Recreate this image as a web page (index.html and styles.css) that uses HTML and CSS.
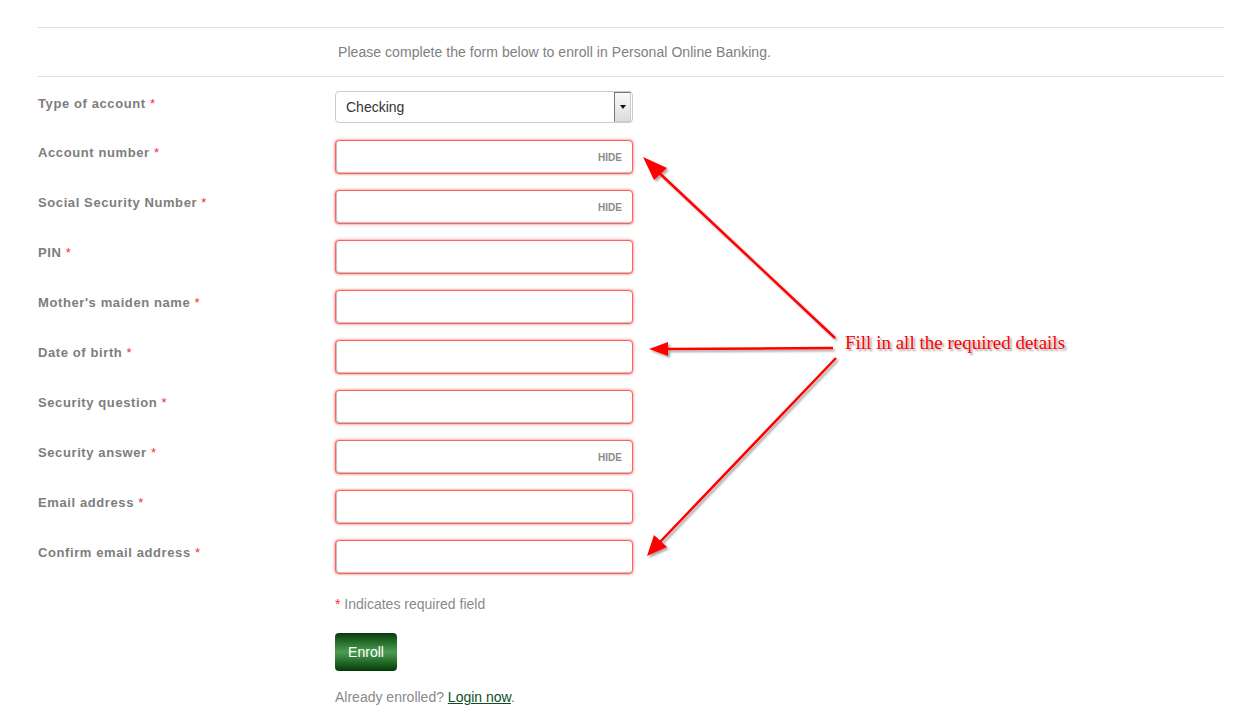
FILE: index.html
```html
<!DOCTYPE html>
<html lang="en">
<head>
  <meta charset="UTF-8" />
  <title>Enroll in Personal Online Banking</title>
  <link rel="stylesheet" href="styles.css">
</head>
<body>

  <div class="page">

    <div class="intro">
      <p>Please complete the form below to enroll in Personal Online Banking.</p>
    </div>

    <form class="enroll-form">

      <div class="row row-first">
        <label>Type of account <span class="req">*</span></label>
        <div class="select">
          <span class="select-value">Checking</span>
          <span class="select-btn"><span class="caret"></span></span>
        </div>
      </div>

      <div class="row">
        <label>Account number <span class="req">*</span></label>
        <div class="field"><input type="text" /><span class="hide">HIDE</span></div>
      </div>

      <div class="row">
        <label>Social Security Number <span class="req">*</span></label>
        <div class="field"><input type="text" /><span class="hide">HIDE</span></div>
      </div>

      <div class="row">
        <label>PIN <span class="req">*</span></label>
        <div class="field"><input type="text" /></div>
      </div>

      <div class="row">
        <label>Mother's maiden name <span class="req">*</span></label>
        <div class="field"><input type="text" /></div>
      </div>

      <div class="row">
        <label>Date of birth <span class="req">*</span></label>
        <div class="field"><input type="text" /></div>
      </div>

      <div class="row">
        <label>Security question <span class="req">*</span></label>
        <div class="field"><input type="text" /></div>
      </div>

      <div class="row">
        <label>Security answer <span class="req">*</span></label>
        <div class="field"><input type="text" /><span class="hide">HIDE</span></div>
      </div>

      <div class="row">
        <label>Email address <span class="req">*</span></label>
        <div class="field"><input type="text" /></div>
      </div>

      <div class="row">
        <label>Confirm email address <span class="req">*</span></label>
        <div class="field"><input type="text" /></div>
      </div>

      <div class="form-end">
        <p class="note"><span class="req">*</span> Indicates required field</p>
        <button type="button" class="btn-enroll">Enroll</button>
        <p class="already">Already enrolled? <a href="#">Login now</a>.</p>
      </div>

    </form>

    <!-- annotation drawn over the page -->
    <div class="callout">
      <svg width="1242" height="714" viewBox="0 0 1242 714">
        <defs>
          <filter id="shadow" x="-10%" y="-10%" width="120%" height="120%">
            <feDropShadow dx="2" dy="2" stdDeviation="1.2" flood-color="#000" flood-opacity="0.35" />
          </filter>
        </defs>
        <g filter="url(#shadow)" stroke="#ff0000" stroke-width="2.5" fill="#ff0000">
          <line x1="835" y1="338" x2="655" y2="169" />
          <polygon points="643,157 667,168 654,180" stroke="none" />
          <line x1="833" y1="348" x2="664" y2="349" />
          <polygon points="649,349 668,342 668,356" stroke="none" />
          <line x1="836" y1="358" x2="660" y2="542" />
          <polygon points="647,556 654,535 667,547" stroke="none" />
        </g>
      </svg>
      <span class="callout-text">Fill in all the required details</span>
    </div>

  </div>

</body>
</html>
```

FILE: styles.css
```css
:root {
  --label-color: #7d7d7d;
  --text-color: #808080;
  --line-color: #dddddd;
  --req-color: #ee3333;
  --font-main: Arial, 'Liberation Sans', sans-serif;
}

body {
  margin: 0;
  font-family: var(--font-main);
  background: #fff;
  color: var(--text-color);
}

.page {
  position: relative;
  padding: 27px 18px 0 38px;
  height: 687px;
  overflow: hidden;
}

.intro {
  border-top: 1px solid var(--line-color);
  border-bottom: 1px solid var(--line-color);
  padding-left: 300px;
}

.intro p {
  margin: 0;
  padding: 16px 0 15px;
  font-size: 14px;
  line-height: 17px;
  letter-spacing: 0.05px;
  color: #808080;
}

.enroll-form {
  margin-top: 14px;
}

.row {
  display: grid;
  grid-template-columns: 297px 298px;
  height: 50px;
}

.row-first {
  height: 49px;
}

.row label {
  font-size: 13px;
  font-weight: bold;
  line-height: 16px;
  letter-spacing: 0.6px;
  color: var(--label-color);
  padding-top: 5px;
}

.req {
  color: var(--req-color);
  font-weight: normal;
}

.select {
  display: flex;
  align-items: center;
  height: 32px;
  box-sizing: border-box;
  border: 1px solid #cccccc;
  border-radius: 4px;
  padding: 0 1px 0 10px;
  background: #fff;
}

.select-value {
  flex: 1;
  font-size: 14px;
  color: #333;
}

.select-btn {
  display: flex;
  align-items: center;
  justify-content: center;
  width: 15px;
  height: 28px;
  border: 1px solid #777;
  border-right-color: #ccc;
  border-bottom-color: #ccc;
  background: linear-gradient(#fafafa, #dcdcdc);
}

.caret {
  width: 0;
  height: 0;
  border-left: 3px solid transparent;
  border-right: 3px solid transparent;
  border-top: 4px solid #111;
}

.field {
  position: relative;
  height: 34px;
}

.field input {
  width: 100%;
  height: 34px;
  box-sizing: border-box;
  border: 1px solid #ff6060;
  border-radius: 4px;
  box-shadow: 0 0 3px rgba(255, 50, 50, 0.8), inset 1px -1px 1px rgba(0, 0, 0, 0.25);
  outline: none;
  padding: 0 40px 0 10px;
  font-size: 14px;
  font-family: var(--font-main);
}

.hide {
  position: absolute;
  right: 11px;
  top: 12px;
  font-size: 10px;
  font-weight: bold;
  color: #8a8a8a;
  line-height: 12px;
}

.form-end {
  padding-left: 297px;
}

.note {
  margin: 6px 0 0;
  font-size: 14px;
  line-height: 17px;
  color: #8a8a8a;
}

.btn-enroll {
  display: block;
  margin-top: 20px;
  width: 62px;
  height: 38px;
  border: none;
  border-radius: 4px;
  background: linear-gradient(#063a0b 0%, #2f7a34 30%, #4e9c53 50%, #2a7430 72%, #033806 100%);
  color: #fff;
  font-family: var(--font-main);
  font-size: 14px;
  cursor: pointer;
}

.already {
  margin: 18px 0 0;
  font-size: 14px;
  line-height: 17px;
  color: #8a8a8a;
}

.already a {
  color: #0d4f2a;
}

.callout {
  position: absolute;
  left: 0;
  top: 0;
  width: 1242px;
  height: 714px;
  pointer-events: none;
}

.callout svg {
  display: block;
}

.callout-text {
  position: absolute;
  left: 845px;
  top: 332px;
  font-family: 'Liberation Serif', 'Times New Roman', serif;
  font-size: 19px;
  color: #ff0000;
  text-shadow: 2px 2px 2px rgba(0, 0, 0, 0.35);
}
```
